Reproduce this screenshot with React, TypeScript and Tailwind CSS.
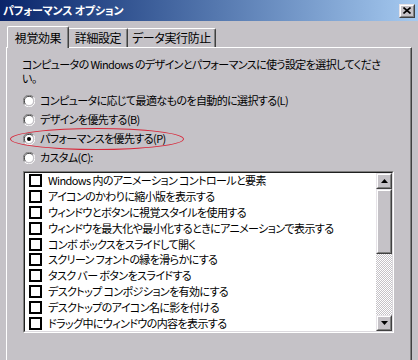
import React from "react";

const FONT = "font-['Noto_Sans_CJK_JP','Noto_Sans',sans-serif] [font-feature-settings:'palt']";

const items = [
  "Windows 内のアニメーション コントロールと要素",
  "アイコンのかわりに縮小版を表示する",
  "ウィンドウとボタンに視覚スタイルを使用する",
  "ウィンドウを最大化や最小化するときにアニメーションで表示する",
  "コンボ ボックスをスライドして開く",
  "スクリーン フォントの縁を滑らかにする",
  "タスク バー ボタンをスライドする",
  "デスクトップ コンポジションを有効にする",
  "デスクトップのアイコン名に影を付ける",
  "ドラッグ中にウィンドウの内容を表示する",
];

const radios = [
  { label: "コンピュータに応じて最適なものを自動的に選択する(L)", checked: false },
  { label: "デザインを優先する(B)", checked: false },
  { label: "パフォーマンスを優先する(P)", checked: true },
  { label: "カスタム(C):", checked: false },
];

function Radio({ checked }: { checked: boolean }) {
  return (
    <svg width="12" height="12" viewBox="0 0 12 12" className="shrink-0">
      <path d="M10.5 2.2 A5.5 5.5 0 0 0 1.5 9.8" fill="none" stroke="#808080" strokeWidth="1" />
      <path d="M9.6 3.0 A4.5 4.5 0 0 0 2.4 9.0" fill="none" stroke="#404040" strokeWidth="1" />
      <path d="M1.5 9.8 A5.5 5.5 0 0 0 10.5 2.2" fill="none" stroke="#ffffff" strokeWidth="1" />
      <circle cx="6" cy="6" r="4" fill="#ffffff" />
      {checked && <circle cx="6" cy="6" r="2" fill="#000000" />}
    </svg>
  );
}

function Raised({ children, className = "" }: { children?: React.ReactNode; className?: string }) {
  return (
    <div className={"border border-t-[#e6e3e8] border-l-[#e6e3e8] border-r-[#404040] border-b-[#404040] " + className}>
      <div className="w-full h-full border border-t-white border-l-white border-r-[#808080] border-b-[#808080] bg-[#c5c2c7] flex items-center justify-center">
        {children}
      </div>
    </div>
  );
}

export default function App() {
  return (
    <div className={"w-[418px] h-[360px] bg-[#c5c2c7] overflow-hidden relative text-black " + FONT}>
      {/* Title bar */}
      <div className="h-[21px] bg-gradient-to-r from-[#0a246a] to-[#a6caf0] flex items-center justify-between pl-[3px] pr-[3px]">
        <span className="text-white font-bold text-[11px] tracking-[-0.2px] leading-none whitespace-nowrap">パフォーマンス オプション</span>
        <Raised className="w-[16px] h-[14px]">
          <svg width="8" height="7" viewBox="0 0 8 7">
            <path d="M0.5 0.5 L7.5 6.5 M7.5 0.5 L0.5 6.5" stroke="#000" strokeWidth="1.6" />
          </svg>
        </Raised>
      </div>

      <div className="flex flex-col pl-[6px] pt-[5px]">
        {/* Tabs */}
        <div className="flex items-end h-[21px] text-[12px] tracking-[-0.4px] leading-none">
          <div className="relative z-10 -mb-px ml-px w-[62px] h-[22px] bg-[#c5c2c7] border-t border-l border-white border-r border-r-[#404040] rounded-t-[2px] flex items-center justify-center shadow-[inset_-1px_0_0_#808080]">
            <span className="whitespace-nowrap">視覚効果</span>
          </div>
          <div className="w-[59px] h-[19px] border-t border-white border-r border-r-[#404040] rounded-tr-[2px] flex items-center justify-center shadow-[inset_-1px_0_0_#808080]">
            <span className="whitespace-nowrap">詳細設定</span>
          </div>
          <div className="w-[88px] h-[19px] border-t border-white border-r border-r-[#404040] rounded-tr-[2px] flex items-center justify-center shadow-[inset_-1px_0_0_#808080]">
            <span className="whitespace-nowrap">データ実行防止</span>
          </div>
        </div>

        {/* Panel */}
        <div className="w-[406px] h-[320px] border-t border-l border-white border-r border-r-[#404040] shadow-[inset_-1px_0_0_#808080] pl-[15px] pt-[9px] flex flex-col text-[11px] tracking-[-0.6px]">
          <div className="leading-[14px] whitespace-nowrap">
            <div>コンピュータの Windows のデザインとパフォーマンスに使う設定を選択してくださ</div>
            <div>い。</div>
          </div>

          <div className="flex flex-col mt-[6px]">
            {radios.map((r) => (
              <div key={r.label} className="h-[19px] flex items-center gap-[5px] ml-px leading-none whitespace-nowrap">
                <Radio checked={r.checked} />
                <span>{r.label}</span>
              </div>
            ))}
          </div>

          {/* List box */}
          <div className="mt-[4px] ml-px w-[371px] h-[162px] border border-t-[#808080] border-l-[#808080] border-r-white border-b-white">
            <div className="w-full h-full border border-t-[#202020] border-l-[#202020] border-r-[#dcd9de] border-b-[#dcd9de] bg-white flex">
              <div className="flex-1 overflow-hidden flex flex-col">
                {items.map((t) => (
                  <div key={t} className="h-[15.8px] shrink-0 flex items-center pl-[4px] gap-[6px] leading-none whitespace-nowrap">
                    <div className="w-[13px] h-[13px] border-2 border-black bg-white shrink-0" />
                    <span>{t}</span>
                  </div>
                ))}
              </div>
              {/* Scrollbar */}
              <div className="w-[16px] h-full flex flex-col">
                <Raised className="w-[16px] h-[16px] shrink-0">
                  <svg width="7" height="4" viewBox="0 0 7 4"><path d="M3.5 0 L7 4 L0 4 Z" fill="#000" /></svg>
                </Raised>
                <Raised className="w-[16px] h-[65px] shrink-0" />
                <div className="flex-1 bg-[repeating-conic-gradient(#c5c2c7_0_25%,#ffffff_0_50%)] bg-[length:2px_2px]" />
                <Raised className="w-[16px] h-[16px] shrink-0">
                  <svg width="7" height="4" viewBox="0 0 7 4"><path d="M0 0 L7 0 L3.5 4 Z" fill="#000" /></svg>
                </Raised>
              </div>
            </div>
          </div>
        </div>
      </div>

      {/* Red annotation ellipse */}
      <div className="absolute left-[10px] top-[128px] w-[174px] h-[22px] border border-[#d8283a] rounded-[50%] pointer-events-none" />
    </div>
  );
}
